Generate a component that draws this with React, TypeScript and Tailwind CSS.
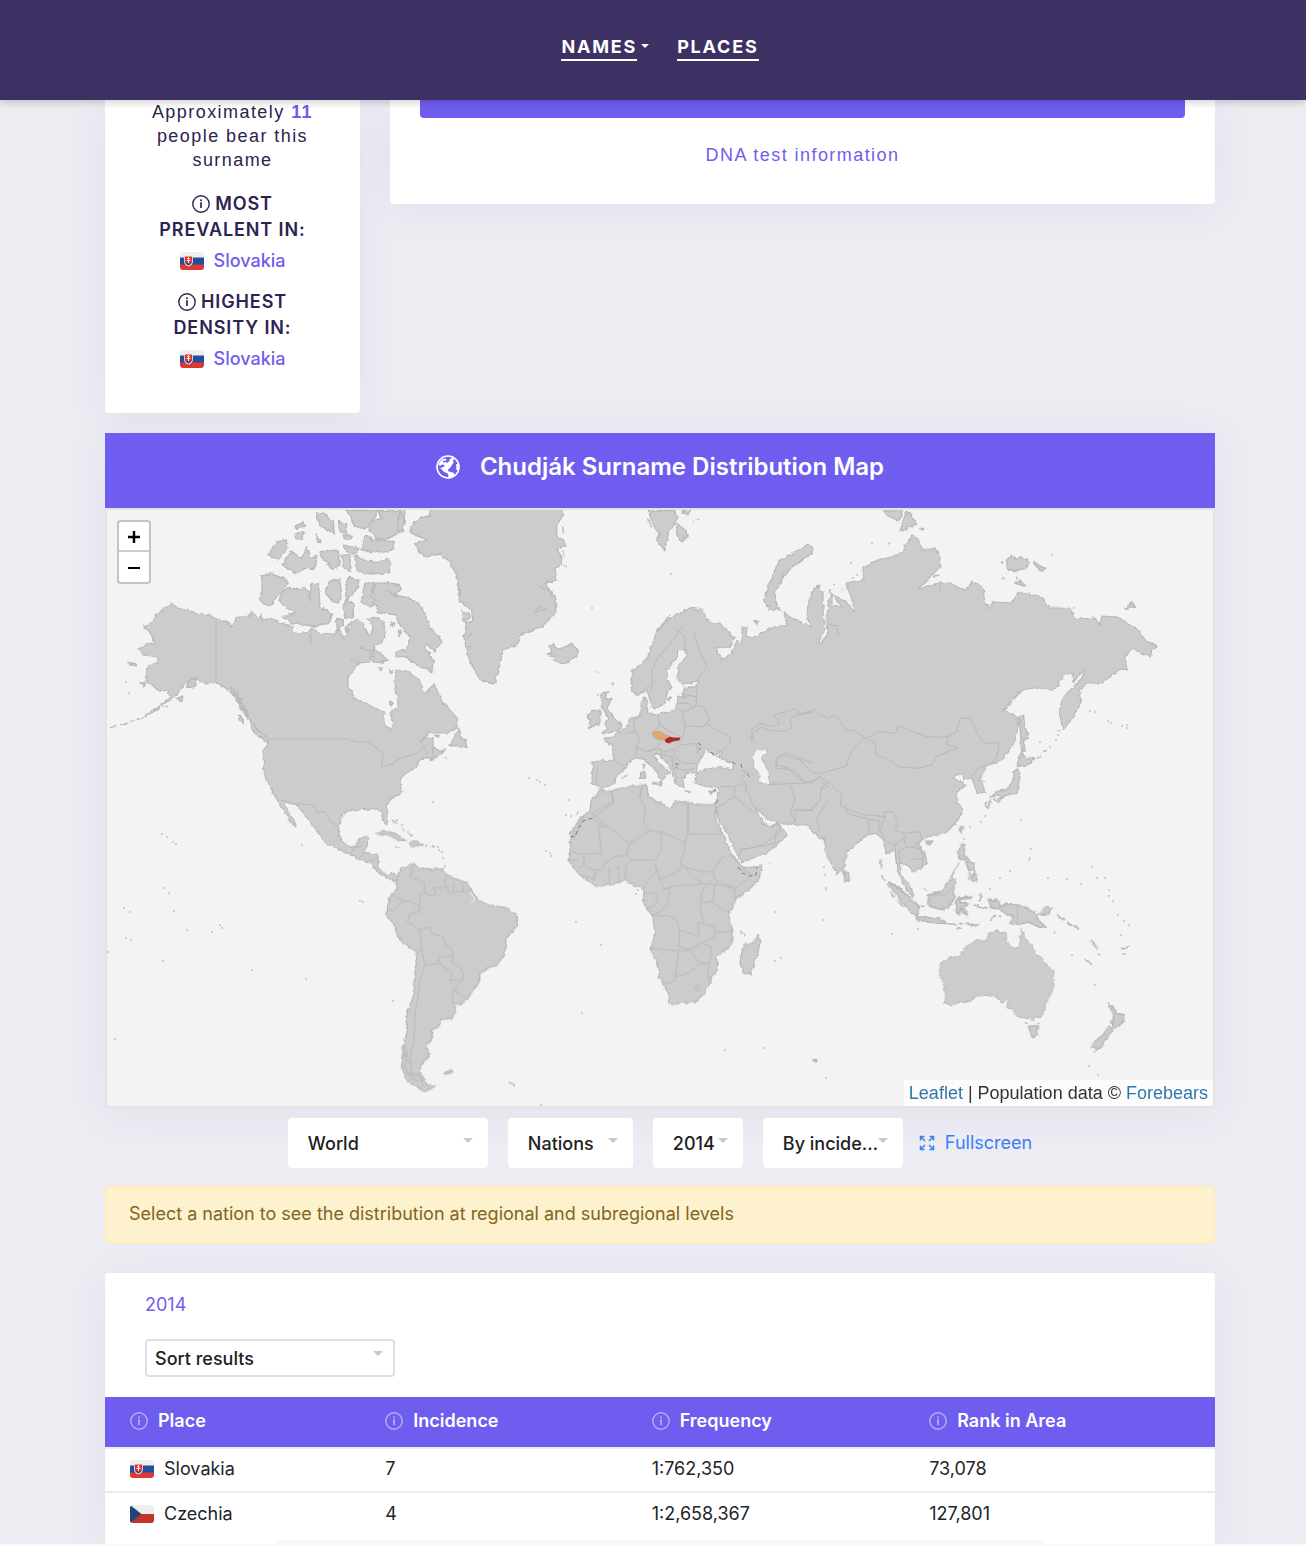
import React from 'react';
import clsx from 'clsx';

const SANS = "font-['Inter','Noto_Sans',sans-serif]";
const ARIAL = "font-['Liberation_Sans',Arial,sans-serif]";

interface PlaceRow {
  place: string;
  flag: 'sk' | 'cz';
  incidence: string;
  frequency: string;
  rank: string;
}

const rows: PlaceRow[] = [
  { place: 'Slovakia', flag: 'sk', incidence: '7', frequency: '1:762,350', rank: '73,078' },
  { place: 'Czechia', flag: 'cz', incidence: '4', frequency: '1:2,658,367', rank: '127,801' },
];

const columns = [
  { label: 'Place', className: 'w-[23%] pl-[25px]' },
  { label: 'Incidence', className: 'w-[24%] pl-[25px]' },
  { label: 'Frequency', className: 'w-[25%] pl-[25px]' },
  { label: 'Rank in Area', className: 'w-[28%] pl-[25px]' },
];

function InfoIcon({ className }: { className?: string }) {
  return (
    <svg viewBox="0 0 18 18" className={clsx('inline-block w-[18px] h-[18px] shrink-0', className)} fill="none" stroke="currentColor" aria-hidden="true">
      <circle cx="9" cy="9" r="8.2" strokeWidth="1.4" />
      <path d="M9 7.2v5.800" strokeWidth="1.700" />
      <circle cx="9" cy="5.2" r="1" fill="currentColor" stroke="none" />
    </svg>
  );
}

function Flag({ code }: { code: 'sk' | 'cz' }) {
  if (code === 'cz') {
    return (
      <svg viewBox="0 0 24 18" className="inline-block w-6 h-[18px] rounded-[3px] shrink-0" aria-hidden="true">
        <path fill="#eeeeee" d="M0 0h24v9H0z" />
        <path fill="#c5312b" d="M0 9h24v9H0z" />
        <path fill="#25447a" d="M0 0l11.500 9L0 18z" />
      </svg>
    );
  }
  return (
    <svg viewBox="0 0 24 18" className="inline-block w-6 h-[18px] rounded-[3px] shrink-0" aria-hidden="true">
      <path fill="#eeeeee" d="M0 0h24v6H0z" />
      <path fill="#224e9e" d="M0 5.500h24v7.500H0z" />
      <path fill="#de3831" d="M0 12.500h24V18H0z" />
      <path fill="#fff" d="M4 4h9v5c0 3-2 4.500-4.500 5.500C6 13.500 4 12 4 9z" />
      <path fill="#e0332c" d="M4.700 4.600h7.600V9c0 1-.4 2-1 2.700H5.700C5 11 4.700 10 4.700 9z" />
      <path fill="#224e9e" d="M5.700 11.500c.8-.9 1.600-.9 2.800-.2 1.200-.7 2-.7 2.800.2-.6 1-1.500 1.700-2.800 2.200-1.300-.5-2.200-1.200-2.800-2.200z" />
      <path stroke="#fff" strokeWidth="0.9" d="M8.500 5.200v6M7.200 6.600h2.600M6.500 8.500h4" />
    </svg>
  );
}

function Caret({ className }: { className?: string }) {
  return (
    <svg viewBox="0 0 10 5" className={clsx('pointer-events-none absolute w-[10px] h-[5px] text-[#c9c9c9]', className)} fill="currentColor" aria-hidden="true">
      <path d="M0 0h10L5 5z" />
    </svg>
  );
}

function MapSelect({ label, options, width }: { label: string; options: string[]; width: string }) {
  return (
    <div className={clsx('relative', width)}>
      <select
        aria-label={label}
        className="block appearance-none w-full h-[50px] bg-white rounded-[4px] pl-5 pr-4 text-[18px] font-medium text-[#212121] text-ellipsis"
      >
        {options.map((option) => (
          <option key={option}>{option}</option>
        ))}
      </select>
      <Caret className="right-[15px] top-5" />
    </div>
  );
}

// Islands too small to have an outline, as [x, y] in map units
const specks: [number, number][] = [
  [162, 834], [167, 837], [173, 842], [176, 844], [164, 888], [169, 893], [124, 908], [130, 912], [126, 938], [131, 940],
  [220, 925], [222, 928], [174, 911], [187, 930], [212, 932], [252, 970], [306, 979], [163, 961], [115, 1039], [108, 952],
  [433, 802], [302, 845], [360, 901], [363, 902], [393, 1001], [541, 1105], [582, 1013], [576, 922], [601, 945], [725, 1050],
  [764, 1048], [826, 1078], [775, 961], [781, 958], [775, 912], [823, 920], [826, 888], [826, 890], [825, 875], [824, 867],
  [892, 934], [918, 929], [1021, 820], [1030, 858], [1031, 849], [1029, 860], [1048, 878], [1067, 879], [1081, 884], [1092, 867],
  [1097, 878], [1105, 878], [1109, 890], [1109, 896], [1113, 901], [1118, 915], [1124, 921], [1129, 925], [1121, 935], [1095, 985],
  [1089, 1066], [1098, 1075], [1072, 955], [1010, 871], [1000, 878], [990, 889], [529, 778], [537, 780], [540, 782], [545, 785],
  [546, 851], [550, 853], [551, 856], [569, 800], [566, 815], [571, 816], [577, 814], [578, 812], [671, 574], [592, 608],
  [636, 894], [638, 890], [642, 889], [129, 693], [126, 682], [872, 543], [851, 563], [857, 575], [853, 578], [1052, 555],
  [1004, 578], [1074, 608], [1090, 711], [1095, 712], [1108, 721], [1111, 723], [1122, 726], [1127, 725], [1127, 728], [446, 758],
  [1040, 742], [1050, 747], [1056, 740], [1058, 735], [981, 822], [985, 816], [988, 808], [990, 803], [970, 827], [964, 839],
  [445, 866], [443, 858], [442, 852], [438, 847], [433, 846], [397, 820], [402, 825], [408, 832], [411, 836],
];

function WorldMap() {
  return (
    <svg viewBox="107 510 1106 596" className="block w-full h-auto bg-[#f3f3f3]" role="img" aria-label="Surname distribution by nation">
      <defs>
        <filter id="coast" x="0" y="0" width="1" height="1" filterUnits="objectBoundingBox">
          <feTurbulence type="fractalNoise" baseFrequency="0.2" numOctaves="3" seed="4" result="noise" />
          <feDisplacementMap in="SourceGraphic" in2="noise" scale="4" xChannelSelector="R" yChannelSelector="G" />
        </filter>
      </defs>

      <g fill="#cccccc" stroke="#b9b9b9" strokeWidth="1.2" strokeLinejoin="round" filter="url(#coast)">
        {/* North and Central America */}
        <path d="M172 604L178 608L187 610L200 614L212 615L217 619L222 620L232 626L238 617L247 617L253 612L258 619L262 614L263 620L272 618L280 623L292 626L292 632L307 633L312 628L318 633L335 634L338 628L342 632L344 640L348 630L353 627L350 622L358 620L363 623L365 628L370 637L373 627L367 619L373 617L383 621L386 632L382 642L375 645L372 652L370 662L360 663L355 668L348 677L348 687L352 692L354 699L365 702L372 707L382 711L384 712L384 723L390 730L393 723L390 713L398 707L398 697L395 690L395 682L396 670L407 671L412 675L420 680L422 690L426 693L431 687L434 683L438 693L443 703L453 713L457 718L458 727L448 733L428 733L420 742L425 738L433 737L433 747L438 752L445 750L432 760L427 757L417 762L417 767L407 772L402 777L400 782L402 793L392 798L386 805L388 815L387 825L383 820L381 812L373 808L368 810L360 809L345 812L340 820L338 831L342 842L350 847L357 845L360 838L369 836L367 845L364 852L378 855L378 868L387 875L395 873L398 879L394 881L385 877L377 872L370 862L360 860L350 854L340 850L325 843L318 832L310 822L303 812L295 804L284 801L288 812L294 820L297 828L290 822L284 811L277 800L270 787L264 773L263 750L268 745L262 738L253 732L250 720L238 703L232 692L218 683L205 683L195 678L185 683L175 697L165 703L155 710L145 717L160 706L170 697L168 691L157 690L153 685L147 682L146 672L150 665L158 662L158 657L143 655L138 648L150 643L155 643L152 635L143 627L153 622L155 615L165 608Z" />
        {/* Arctic islands, Baffin, Newfoundland */}
        <g transform="translate(105 500) scale(.33333)" strokeWidth="4">
          <path d="M470 228L500 222L535 235L550 250L510 295L505 312L485 320L463 297L472 265Z" />
          <path d="M555 262L580 270L600 262L612 275L615 300L620 250L640 250L645 320L685 345L668 370L625 378L560 370L535 350L575 338L545 325L522 300L530 275Z" />
          <path d="M540 180L560 155L590 175L605 142L615 172L635 170L632 205L600 205L570 222L550 205L535 195Z" />
          <path d="M488 165L520 125L548 120L545 145L520 178Z" />
          <path d="M570 80L598 65L598 82L575 85ZM570 100L598 95L590 118L572 115Z" />
          <path d="M635 40L655 40L685 65L688 102L665 88L645 80ZM700 62L722 72L725 98L705 95ZM715 104L740 106L735 118L718 116ZM633 105L646 125L638 130Z" />
          <path d="M645 155L700 150L703 200L680 205L665 185L650 175ZM708 165L735 165L738 215L715 200ZM712 135L760 145L755 160L730 158Z" />
          <path d="M748 165L775 180L815 188L850 178L858 190L852 218L800 222L757 215Z" />
          <path d="M775 120L785 105L805 122L820 118L865 125L865 145L845 160L800 155L770 150Z" />
          <path d="M725 32L815 32L812 50L790 75L775 88L750 78L738 50Z" />
          <path d="M818 32L900 32L895 90L870 105L845 118L815 115L792 90L795 65L830 55Z" />
          <path d="M680 240L705 238L710 290L700 310L680 302L660 275ZM725 240L735 232L762 240L755 270L735 290L722 300ZM722 300L745 310L745 350L720 355L714 325Z" />
          <path d="M780 250L808 245L800 290L808 315L795 322L770 305L775 270Z" />
          <path d="M812 250L850 248L885 255L888 270L870 285L905 292L940 310L965 345L970 375L1012 425L990 455L965 430L962 450L985 480L980 515L935 495L900 470L872 470L875 455L905 450L915 410L888 380L870 345L820 335L808 300L805 270Z" />
          <path d="M808 445L850 480L825 488L800 485ZM855 365L870 370L865 380L858 378ZM880 390L890 400L882 410ZM822 500L834 505L828 515ZM853 510L862 512L858 520ZM853 605L862 610L855 618Z" />
          <path d="M695 355L715 360L715 380L695 382ZM720 385L735 370L725 400Z" />
          <path d="M1062 685L1050 705L1033 735L1058 738L1085 745L1080 720L1065 708ZM990 705L1005 708L1000 712ZM985 740L1005 755L1020 750L980 782Z" />
          <path d="M68 490L90 488L95 498ZM108 548L125 550L115 558ZM215 595L235 588L230 605ZM250 545L275 535L272 558L245 565ZM400 645L415 655L415 672L402 660Z" />
          <path d="M15 680L35 677M45 675L65 672M75 665L90 662M95 660L115 653M118 650L135 640M140 635L165 625M170 620L185 622" fill="none" />
          <path d="M380 560L395 590L420 620L430 650M395 570L400 600L425 640M440 660L455 690L490 715L490 735M375 575L410 600M400 620L440 660M760 440L800 455M735 475L765 490M615 400L620 430M850 270L870 290" fill="none" />
        </g>
        {/* Greenland, Iceland, Svalbard, British Isles */}
        <g transform="translate(400 500) scale(.33333)" strokeWidth="4">
          <path d="M92 20L490 20L490 45L470 75L470 110L495 125L495 140L470 145L485 170L485 195L465 205L470 240L435 250L465 290L468 335L462 345L425 380L370 400L345 435L310 450L300 490L285 545L280 552L240 538L215 495L200 455L192 410L200 370L218 360L215 330L178 305L178 260L168 225L150 185L120 162L80 170L60 160L45 130L80 118L35 100L30 80L60 55L90 45Z" />
          <path d="M420 258L440 270L460 290M402 340L440 325M405 330L425 322M193 410L215 405M200 440L222 440" fill="none" />
          <path d="M185 330L210 345L200 365L188 360ZM488 80L490 100M492 150L492 170M492 195L500 205" />
          <path d="M0 35L12 60L5 95L-8 90Z" />
          <path d="M445 440L460 430L468 445L500 438L515 430L535 450L530 470L490 492L460 480L462 468L445 462L458 452Z" />
          <path d="M745 32L825 32L832 60L805 100L795 150L772 125L780 100L765 85ZM830 70L850 85L865 105L845 125L830 110ZM850 32L870 32L865 42L850 40ZM742 55L755 80M878 65L882 65M890 58L898 58" />
          <path d="M602 585L625 572L615 595L635 600L620 625L640 650L665 675L655 695L605 700L625 685L615 670L625 650L605 620Z" />
          <path d="M575 632L600 630L600 670L565 683L572 660L562 650ZM635 555L642 545M590 515L596 520M590 590L596 582" />
          <path d="M725 795L735 795L732 805ZM722 815L735 812L733 835L722 835ZM757 848L785 845L780 858ZM850 872L875 876M925 875L945 870L935 880ZM665 835L685 825" />
          <path d="M1062 362L1075 362L1070 375ZM800 598L812 590L808 600ZM845 580L858 583L848 595ZM750 622L765 615" />
          <path d="M768 395L790 370L810 345M850 330L880 322L910 330M860 345L905 340M692 520L715 525M695 545L720 540" fill="none" />
        </g>
        {/* Europe and Asia */}
        <path d="M632 670L631 682L633 692L637 695L647 690L650 700L654 709L665 703L667 693L672 687L667 680L667 670L677 658L678 650L687 649L687 655L678 667L677 680L683 684L698 682L695 687L685 688L683 693L686 698L678 697L677 703L675 710L667 712L657 715L648 713L646 707L648 702L645 698L641 702L641 713L637 717L630 718L627 727L622 730L613 737L604 739L612 746L614 760L600 761L592 762L593 770L591 783L597 786L602 788L613 785L617 775L627 767L628 762L636 758L646 760L657 772L662 781L666 775L670 773L658 762L653 755L657 753L667 763L672 772L673 777L677 785L684 788L683 779L688 773L697 772L697 765L703 755L706 750L715 755L723 750L718 757L733 763L733 770L717 767L703 770L696 773L695 783L707 787L719 787L717 797L715 807L718 818L727 833L733 847L742 862L753 858L767 853L773 848L787 835L780 825L777 822L773 827L767 827L760 817L755 809L762 813L767 820L776 821L783 824L807 825L820 839L824 837L825 850L837 875L845 867L846 853L857 843L867 835L877 833L882 840L887 853L895 850L897 870L902 882L913 898L914 896L910 886L902 876L899 863L907 865L915 872L927 863L925 853L918 842L927 837L947 832L958 820L963 810L958 803L957 792L965 785L953 778L963 773L964 780L972 778L977 793L985 792L980 777L988 765L1000 762L1015 742L1019 720L1012 713L1003 711L1022 690L1040 687L1048 690L1057 688L1063 675L1072 673L1073 682L1085 669L1083 677L1063 698L1059 710L1063 730L1073 717L1081 703L1079 690L1088 683L1102 683L1120 669L1127 670L1125 657L1132 648L1140 652L1150 657L1152 650L1158 646L1145 640L1140 632L1118 617L1102 616L1100 625L1095 618L1075 619L1070 608L1050 608L1042 597L1018 592L1012 603L993 602L990 609L985 603L983 587L972 581L967 590L955 587L952 583L940 583L918 589L932 575L940 567L940 557L935 548L922 550L918 539L913 536L905 545L903 553L883 558L863 568L864 580L846 584L853 602L854 612L848 603L833 595L842 607L832 605L832 593L828 600L827 623L828 632L822 643L819 642L825 630L823 613L823 593L815 588L808 603L807 617L812 627L790 617L783 612L788 625L772 628L752 638L747 637L748 628L742 627L742 645L737 641L730 655L722 660L716 648L730 647L734 638L720 623L710 622L703 612L690 608L670 618L657 632L648 657L637 668Z" />
        {/* Russian Arctic, Sakhalin, Japan */}
        <g transform="translate(740 500) scale(.33333)" strokeWidth="4">
          <path d="M70 300L85 260L105 210L120 180L155 162L205 135L218 142L215 160L170 190L130 230L105 280L110 315L122 330L90 328Z" />
          <path d="M430 30L485 30L485 50L475 62L440 45ZM497 38L510 38L530 72L480 95Z" />
          <path d="M800 180L815 165L830 180L840 170L868 185L860 205L820 212L803 208ZM880 188L918 205L900 212ZM825 250L840 240L855 258ZM1155 325L1175 308L1188 318ZM787 182L790 192M785 232L792 238M828 230L834 238M537 86L550 90M445 130L455 130M582 228L598 225M228 260L240 255L238 265Z" />
          <path d="M838 650L850 645L855 680L865 715L850 720L855 750L845 755Z" />
          <path d="M843 758L860 775L885 775L858 800L828 798L835 785Z" />
          <path d="M832 805L842 825L832 868L832 880L800 885L790 895L775 885L750 895L770 875L800 868L822 840L822 815Z" />
          <path d="M735 910L752 900L745 925ZM760 900L785 892L775 905ZM890 775L905 765M910 755L918 750M955 695L960 690M272 265L268 280M305 265L308 275M280 252L285 255M265 372L290 378L295 403" fill="none" />
        </g>
        {/* South America and Africa */}
        <g transform="translate(360 780) scale(.33333)" strokeWidth="4">
          <path d="M110 290L125 265L160 250L175 262L215 268L245 268L270 290L320 308L340 340L355 362L395 378L435 382L472 405L472 435L440 475L437 515L412 555L390 560L360 580L358 605L320 660L300 675L278 668L288 692L275 715L242 718L238 740L215 750L215 780L195 800L210 820L182 860L182 880L205 915L225 918L195 935L150 910L130 880L125 840L130 800L140 760L140 705L160 650L165 580L172 520L120 480L100 430L78 405L80 380L90 350L112 325Z" />
          <path d="M50 162L75 152L105 160L138 182L115 182L90 165ZM150 185L165 183L188 195L160 198L148 194ZM105 200L120 202M195 198L205 198M215 200L225 200M245 265L255 262M250 878L275 870L278 878L255 882ZM447 905L465 915M235 208L245 215M95 120L110 130M125 145L135 155M145 160L160 168" />
          <path d="M135 790L140 830L135 860L150 890L175 905M130 820L150 850M140 880L180 890L190 920" fill="none" />
          <path d="M720 28L745 35L800 20L860 15L865 50L905 72L935 85L945 62L985 70L1045 75L1070 72L1065 110L1090 165L1110 215L1140 250L1150 265L1180 260L1208 255L1195 300L1170 325L1130 355L1105 400L1118 450L1118 490L1070 530L1073 572L1050 595L1050 610L1030 645L1005 665L940 672L926 668L925 640L900 595L893 550L870 505L885 460L878 405L850 370L852 320L820 318L800 300L750 315L706 320L655 280L625 240L630 215L632 170L655 120L690 90L695 65Z" />
          <path d="M1195 462L1200 490L1190 530L1172 580L1152 580L1140 550L1145 520L1150 495L1180 490ZM1140 456L1158 466M1228 250L1236 248" />
        </g>
        {/* South East Asia and Oceania */}
        <g transform="translate(740 780) scale(.33333)" strokeWidth="5">
          <path strokeWidth="3" d="M745 460L775 452L800 460L795 485L825 505L838 500L845 445L858 480L875 495L885 520L905 535L940 575L942 620L918 670L910 705L880 718L830 710L815 685L800 685L805 655L788 670L760 645L715 648L688 665L650 668L635 678L612 668L618 650L610 610L597 585L600 552L625 535L660 528L680 500L710 478L735 485Z" />
          <path d="M865 738L895 740L892 765L878 772ZM858 728L862 732M893 728L897 733" />
          <path d="M1105 672L1120 682L1130 700L1155 705L1148 725L1125 745L1115 725L1125 712ZM1105 740L1118 745L1100 775L1080 805L1055 803L1060 788L1090 765ZM1062 810L1066 814" />
          <path d="M443 308L465 315L500 345L535 380L532 408L510 395L485 365Z" />
          <path d="M528 410L560 413L600 415L618 430L575 428L535 420ZM620 432L650 432M655 430L670 432M675 433L700 433M650 442L662 445M690 440L718 430" />
          <path d="M565 345L600 335L635 295L648 300L638 340L645 350L625 385L600 388L568 378Z" />
          <path d="M655 352L695 348L690 355L660 358L660 370L685 372L672 382L682 405L668 398L662 380L658 405L648 390L650 365Z" />
          <path d="M665 192L675 195L672 225L688 240L660 238L655 215ZM675 245L700 250L705 275L690 270ZM690 290L708 280L710 305L690 300ZM655 250L632 295M680 260L690 285" />
          <path d="M745 358L775 362L780 380L800 370L850 378L885 400L895 420L918 442L895 440L862 425L835 435L810 430L820 412L780 390L755 382ZM890 405L930 400L935 385L915 380" />
          <path d="M720 340L725 350L718 365M700 375L745 385M765 405L750 425M778 405L782 412M950 405L975 420M980 430L1010 440M1005 440L1015 450M1052 482L1065 495M1060 495L1070 505M1033 535L1055 552M1143 508L1168 500M1148 520L1155 525M1075 520L1078 527M938 455L948 455" />
          <path d="M312 272L325 280L328 300L315 305ZM560 185L578 183L568 195ZM658 145L670 138L665 162ZM423 238L421 265M428 285L433 300M452 335L462 350M470 360L488 380M535 378L555 380M552 322L560 332M218 838L232 840L225 845Z" />
        </g>
      </g>

      {/* Caspian Sea and the lakes */}
      <path d="M752 757L757 750L767 748L767 753L761 757L767 768L769 773L770 785L758 783L759 775L753 763Z" fill="#f3f3f3" stroke="#bcbcbc" filter="url(#coast)" />
      <path d="M470 892L475 899L471 903M372 983L374 988" stroke="#f3f3f3" strokeWidth="1" fill="none" />

      {/* Land borders */}
      <g fill="none" stroke="#b9b9b9" strokeWidth="1" strokeLinejoin="round">
        <path d="M216 619V683L222 685L235 697L248 720" />
        <path d="M269 739H347L357 742L368 742L378 749L383 755L381 767L393 764L397 760L405 757L416 754L424 746L428 755M281 800L291 804L303 804L313 805L318 813L324 811L331 822L340 828M350 856L354 848L362 846M365 852L361 857M369 862L378 857M378 868L372 868" />
        <g transform="translate(360 780) scale(.33333)" strokeWidth="3">
          <path d="M158 258L152 290L192 308L195 338L180 342L178 380L150 365L130 362L98 345M82 388L100 390L130 362M178 380L180 395L150 400L142 425L165 440L180 450L210 442L218 462L250 470L258 495L275 505L278 528M195 338L215 348L230 340L220 325L260 320L252 300L265 285M260 320L268 340L290 335L320 335L335 325M282 308L278 335M308 310L310 335M180 450L185 510L172 520M185 510L195 555L235 550L240 530L278 528L278 550L300 560L312 590L300 602L270 600L278 580L238 550M300 602L312 595L280 628L275 665M280 628L318 655M195 555L180 600L172 660L165 700L162 780L150 830L155 880L182 880" />
          <path d="M755 35L760 65L695 100L808 190L870 152L902 155L975 185L985 160V70M850 15L838 50L855 80L852 130L870 152M985 162H1088M695 115L735 140L715 140L725 220L672 222L650 220L630 212M670 110L665 128L655 130L655 150L640 172L630 172M808 190L800 225L765 230L730 255L725 270L705 270L685 265L672 250L670 225M800 225L818 240L885 240L905 205L902 155M975 185L972 215L962 245L965 265L930 285L900 298L885 255M818 240L798 255L795 300M775 262L778 305M748 265V315M765 262L775 262M705 270L703 300L685 290L658 285M655 265L672 255M630 240L655 240M885 250L890 275L862 305L852 320M900 298L912 328L945 318L1030 312L1000 290L975 262M962 245L975 262L1028 275L1060 275L1070 255L1085 232L1110 225L1140 252M1028 312L1065 312L1062 340L1055 365L1025 370M1065 312L1125 325L1180 285L1130 262M1125 325V360M1060 275L1065 300L1125 325M912 328L930 320L920 380L890 400L878 405L925 408L950 420L958 450L990 460L1018 470L1012 430L1030 430L1020 380L1025 340L1035 318M1055 365L1105 400M1070 458L1118 452M1030 430L1062 440L1068 470L1020 490L992 510L958 500V450M870 505L950 512L992 510M955 515L945 600L920 612L908 605M945 590L985 580L1020 550L1048 550L1055 500L1030 492M992 515L1020 550M1048 550L1042 590M1005 620L1015 614L1022 622L1010 632ZM1042 585L1050 598M852 340L890 340L892 360L880 380L860 385" />
        </g>
        <g transform="translate(560 660) scale(.33333)" strokeWidth="3">
          <path d="M272 98L278 70L275 30L295 -10L340 -60L370 -105M440 20L410 65M440 20L415 -40L400 -90M350 -90L375 -70V-20M240 100L275 70" />
          <path d="M382 80L410 82L410 110L375 105M410 110L408 138L375 155L352 145M355 130L385 130L400 145M408 138L432 140L450 180L430 200L375 198L368 160M292 165L300 195L330 215L368 232L375 198M430 200L440 190L460 205L512 230L510 250L490 268M245 165L220 180L225 215L195 222M225 215L240 235L230 262L260 275L290 262L320 230M300 195L280 215M230 262L228 290M260 275L300 265L310 275L345 268L360 255L410 250L415 285M345 268L340 290L370 310L410 310M300 265L305 285L335 290L340 330L350 350L345 370M340 325L375 330L405 325M368 232L355 250M160 302L195 320M112 320L108 375M560 330L545 355L560 375L555 400M545 330L580 345" />
          <path d="M580 245L575 210L600 190L635 200L660 190L640 165L680 155L710 145L720 165L760 155M480 380L525 380L545 370L565 395L575 430L610 465M525 380L522 410L485 435L470 445M522 410L585 460M600 490L630 500L655 490L660 515L610 555L545 570L535 590M650 365L625 375L690 370L705 420L690 455L710 490M650 325L650 295L680 280L760 310M650 325L700 330L740 370L690 370M740 370L780 350M690 450L750 450L770 430" />
          <path d="M382 520V430M155 402L160 430L95 475M245 382L240 410" />
        </g>
        <g transform="translate(740 500) scale(.33333)" strokeWidth="3">
          <path d="M35 725L32 705L65 680L85 690L125 695L155 685L150 655L185 640L225 628L240 645L265 655L285 645L320 692L340 690L375 713L345 740L330 765L320 798L245 820L215 818L180 780L125 765L108 775V800M108 795L145 805L180 840L215 850L240 830L265 850M375 713L405 730L410 765L445 778L475 800L530 805L575 795L590 770L655 742L620 735L625 708L600 712L560 710L520 695L475 678L465 700L415 695L385 713M625 708L650 695L660 655L690 655L720 715L735 730L778 728L770 775L745 795L715 805L695 830M600 250V278M715 840L735 845" />
        </g>
        <g transform="translate(740 780) scale(.33333)" strokeWidth="3">
          <path d="M160 130L170 90L215 92L240 60L245 20L265 5L305 45L300 75L320 85L380 108L390 105L435 110L430 95L460 95L475 130L465 150L490 160L540 155L545 180M265 60L230 115L240 150M320 85L320 100L385 118L385 140L390 165M385 118L420 122L415 155M435 110L420 150L440 185L465 195L490 175L500 200L540 205L550 235L545 260M465 195L470 250M490 160L500 180M500 200L475 215L480 245M510 240L550 235M545 185L525 190L560 235M833 378V435M570 345L615 345L640 318" />
          <path d="M250 10L265 20L245 25M0 208L30 205L80 195L105 190L110 150" />
        </g>
      </g>

      {/* Disputed borders */}
      <g fill="none" stroke="#7d7d7d" strokeWidth="1" strokeDasharray="4 3">
        <path d="M592 818L583 821L578 829L575 837L569 836L572 828" />
        <path d="M738 867L742 873L750 876L756 875L757 867" />
        <path d="M698 743L702 746L699 750M711 752L717 757M732 762L737 765M741 764L742 768M747 774L751 778M675 764L679 764L676 768M713 791L716 789M716 803L718 800" />
      </g>

      <g fill="#bebebe">
        {specks.map(([x, y]) => (
          <circle key={`${x}-${y}`} cx={x} cy={y} r="0.9" />
        ))}
      </g>

      <path d="M652 733L657 731L661 732L664 734L669 736L667 739L660 740L655 738Z" fill="#dda873" stroke="#d5a677" />
      <path d="M665 740L670 737L673 738L680 738L679 740L673 741L669 743L666 742Z" fill="#a92c26" stroke="#a92c26" />
    </svg>
  );
}

function SummaryBlock({ title, place }: { title: string; place: string }) {
  return (
    <div className="mb-[15px]">
      <h3 className="text-[18px] leading-[26px] font-semibold tracking-wider uppercase">
        <InfoIcon className="mr-[5px] align-[-3px]" />
        {title}
      </h3>
      <a href="#slovakia" className="mt-[5px] flex justify-center items-center gap-[10px] text-[18px] leading-[26px] font-medium text-[#6f5def]">
        <Flag code="sk" />
        {place}
      </a>
    </div>
  );
}

export default function App() {
  return (
    <div className={clsx('min-h-screen bg-[#edecf3] text-[#212529]', SANS)}>
      <header className="sticky top-0 z-20 h-[100px] bg-[#3c3162] shadow-[0_2px_8px_rgba(0,0,0,0.2)]">
        <nav className="h-full pl-[14px] pb-1 flex items-center justify-center gap-7 text-[18px] leading-[24px] font-bold text-white tracking-widest">
          <a href="#names" className="flex items-center gap-1">
            <span className="border-b-2 border-white">NAMES</span>
            <svg viewBox="0 0 8 4" className="w-2 h-1 mb-1" fill="currentColor" aria-hidden="true">
              <path d="M0 0h8L4 4z" />
            </svg>
          </a>
          <a href="#places" className="border-b-2 border-white">PLACES</a>
        </nav>
      </header>

      <div className="pl-[14px]">
        <main className="max-w-[1110px] mx-auto">
          <div className="flex items-start gap-[30px]">
            <section className="w-[255px] shrink-0 bg-white rounded-b-[4px] px-10 pb-[26px] text-center text-[#2d2350] shadow-[0_5px_40px_rgba(60,49,130,0.06)]">
              <p className={clsx('mb-[19px] text-[18px] leading-[24px] tracking-[0.08em]', ARIAL)}>
                Approximately <b className="text-[#6f5def]">11</b> people bear this surname
              </p>
              <SummaryBlock title="Most prevalent in:" place="Slovakia" />
              <SummaryBlock title="Highest density in:" place="Slovakia" />
            </section>

            <section className="grow bg-white rounded-b-[4px] px-[30px] pb-[37px] text-center shadow-[0_5px_40px_rgba(60,49,130,0.06)]">
              <button type="button" aria-label="Get a DNA test" className="block w-full h-[18px] rounded-b-[4px] bg-[#6f5def]" />
              <a href="#dna" className={clsx('inline-block mt-[25px] text-[18px] leading-[24px] tracking-[0.08em] text-[#6f5def]', ARIAL)}>
                DNA test information
              </a>
            </section>
          </div>

          {/* Distribution map */}
          <section className="relative mt-5 shadow-[0_5px_40px_rgba(60,49,130,0.06)]">
            <h2 className="h-[75px] pb-2 flex items-center justify-center gap-5 bg-[#6f5def] text-white text-[24px] leading-[30px] font-semibold">
              <svg viewBox="0 0 24 24" className="w-6 h-6" fill="none" stroke="currentColor" aria-hidden="true">
                <circle cx="12" cy="12" r="11" strokeWidth="1.600" />
                <path
                  fill="currentColor"
                  stroke="none"
                  d="M2.500 9L4 6.500 6.500 4l2.500-.5 1.500 1L9.500 6l-2-.5-1 1.500 1.500.5 2-.5 1 1L13 6.500l1-2.500 2.500-1.500 1.500 1.500-1 2 .5 2-2 2.500-1.500 2.500-2 1.500.5 2 2.500.5 3 1 .5 1.500-1 2-2 1.500-2.500.5-1-1 .5-2.500-1.500-2-2-.5L7 16l-1.500-2-2-.5L6 12.500 9 11 7.500 9.500 5 10l-1 1.500z"
                />
                <path fill="currentColor" stroke="none" d="M20 9l2.500.5.5 3-1.500 3-1.500-1.500.5-2z" />
              </svg>
              Chudják Surname Distribution Map
            </h2>
            <div className="relative border-2 border-[#e4e4e6]">
              <WorldMap />
              <div className="absolute left-[10px] top-[10px] w-[34px] border-2 border-[#c3c3c3] rounded-[4px] bg-white overflow-hidden">
                <button type="button" aria-label="Zoom in" className="flex w-full h-[30px] pt-[2px] items-center justify-center border-b-2 border-[#cccccc]">
                  <svg viewBox="0 0 14 14" className="w-[14px] h-[14px]" stroke="#000" strokeWidth="2.400" aria-hidden="true">
                    <path d="M1 7h12M7 1v12" />
                  </svg>
                </button>
                <button type="button" aria-label="Zoom out" className="flex w-full h-[30px] pt-[2px] items-center justify-center">
                  <svg viewBox="0 0 14 14" className="w-[14px] h-[14px]" stroke="#000" strokeWidth="2" aria-hidden="true">
                    <path d="M1 7h12" />
                  </svg>
                </button>
              </div>
              <div className={clsx('absolute right-0 bottom-0 px-[5px] bg-white/70 text-[18px] leading-[26px] text-[#333]', ARIAL)}>
                <a href="#leaflet" className="text-[#2f79a8]">Leaflet</a> | Population data ©{' '}
                <a href="#forebears" className="text-[#2f79a8]">Forebears</a>
              </div>
            </div>
          </section>

          <div className="mt-[10px] flex items-center justify-center gap-5">
            <MapSelect label="Area" options={['World']} width="w-[200px]" />
            <MapSelect label="Level" options={['Nations']} width="w-[125px]" />
            <MapSelect label="Year" options={['2014']} width="w-[90px]" />
            <MapSelect label="Measure" options={['By incidence', 'By frequency']} width="w-[140px]" />
            <button type="button" className="-ml-1 flex items-center gap-[10px] text-[18px] leading-[26px] text-[#3b7ff5]">
              <svg viewBox="0 0 16 16" className="w-4 h-4" fill="none" stroke="currentColor" strokeWidth="1.500" aria-hidden="true">
                <path d="M1.500 5.500v-4h4M10.500 1.500h4v4M14.500 10.500v4h-4M5.500 14.500h-4v-4M2 2l4 4M14 2l-4 4M14 14l-4-4M2 14l4-4" />
              </svg>
              Fullscreen
            </button>
          </div>

          <div role="alert" className="mt-[18px] px-[22px] pt-[13px] pb-[15px] border-2 border-[#feedb8] rounded-[5px] bg-[#fdf1ce] text-[18px] leading-[26px] text-[#80661f]">
            Select a nation to see the distribution at regional and subregional levels
          </div>

          {/* Results */}
          <section className="mt-[29px] bg-white rounded-t-[4px] pb-[9px] shadow-[0_5px_40px_rgba(60,49,130,0.06)]">
            <div className="px-10 pt-[19px] pb-5">
              <a href="#2014" className="block text-[18px] leading-[26px] text-[#6f5def]">2014</a>
              <div className="relative w-[250px] mt-[21px]">
                <select
                  aria-label="Sort results"
                  className="appearance-none block w-full h-[38px] pl-2 pr-6 border-2 border-[#dfdee8] rounded-[4px] bg-white text-[18px] font-medium text-[#212121]"
                >
                  <option>Sort results</option>
                </select>
                <Caret className="right-3 top-3" />
              </div>
            </div>
            <table className="w-full table-fixed text-left text-[18px] leading-[26px]">
              <thead>
                <tr className="h-[51px] bg-[#6f5def] text-white">
                  {columns.map((column) => (
                    <th key={column.label} className={clsx('pb-[2px] font-semibold', column.className)}>
                      <span className="flex items-center gap-[10px]">
                        <InfoIcon className="opacity-50" />
                        {column.label}
                      </span>
                    </th>
                  ))}
                </tr>
              </thead>
              <tbody>
                {rows.map((row) => (
                  <tr key={row.place} className="h-11 border-t-2 border-[#edecf3]">
                    <td className="pl-[25px] pb-[2px]">
                      <span className="flex items-center gap-[10px]">
                        <Flag code={row.flag} />
                        {row.place}
                      </span>
                    </td>
                    <td className="pl-[25px] pb-[2px]">{row.incidence}</td>
                    <td className="pl-[25px] pb-[2px]">{row.frequency}</td>
                    <td className="pl-[25px] pb-[2px]">{row.rank}</td>
                  </tr>
                ))}
              </tbody>
            </table>
          </section>
        </main>
      </div>

      {/* Collapsed bottom banner */}
      <div className="fixed inset-x-0 bottom-0 z-10 pl-[14px] flex justify-center items-end border-b-2 border-[#f7f7f8]">
        <div className="w-[766px] h-1 bg-[#f7f7f7]" />
      </div>
    </div>
  );
}
